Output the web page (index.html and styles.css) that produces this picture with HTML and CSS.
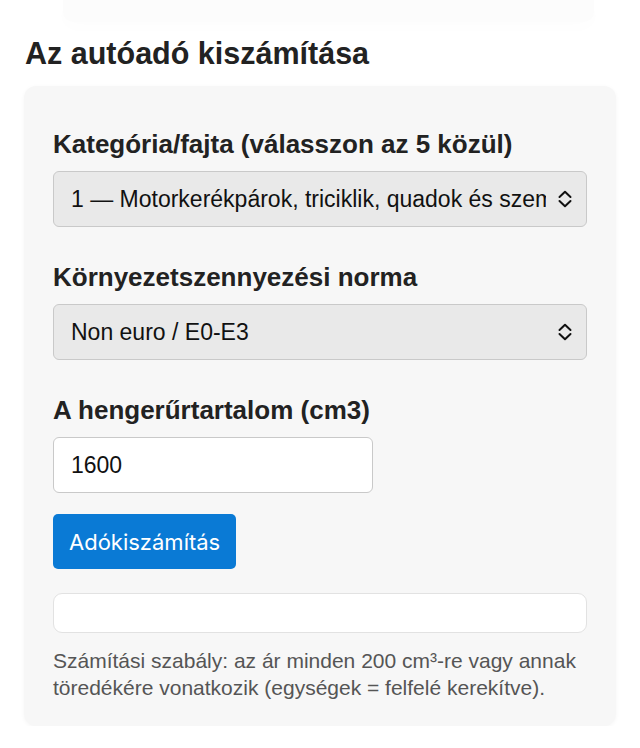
FILE: index.html
```html
<!DOCTYPE html>
<html lang="hu">
<head>
<meta charset="utf-8">
<title>Az autóadó kiszámítása</title>
<link rel="stylesheet" href="styles.css">
</head>
<body>
<div class="prev"></div>
<main class="page">
  <h1 class="title">Az autóadó kiszámítása</h1>
  <section class="card">
    <div class="field">
      <label class="label" for="cat">Kategória/fajta (válasszon az 5 közül)</label>
      <div class="select-wrap">
        <select id="cat" class="select">
          <option>1 — Motorkerékpárok, triciklik, quadok és személygépkocsik</option>
        </select>
        <svg class="chev" viewBox="0 0 16 20" width="16" height="20" aria-hidden="true"><path d="M2.5 8 L8 2.8 L13.5 8 M2.5 12 L8 17.2 L13.5 12" fill="none" stroke="#111" stroke-width="2" stroke-linecap="round" stroke-linejoin="round"/></svg>
      </div>
    </div>
    <div class="field field-next">
      <label class="label" for="norm">Környezetszennyezési norma</label>
      <div class="select-wrap">
        <select id="norm" class="select">
          <option>Non euro / E0-E3</option>
        </select>
        <svg class="chev" viewBox="0 0 16 20" width="16" height="20" aria-hidden="true"><path d="M2.5 8 L8 2.8 L13.5 8 M2.5 12 L8 17.2 L13.5 12" fill="none" stroke="#111" stroke-width="2" stroke-linecap="round" stroke-linejoin="round"/></svg>
      </div>
    </div>
    <div class="field field-next">
      <label class="label" for="cc">A hengerűrtartalom (cm3)</label>
      <input id="cc" class="input" type="text" value="1600">
    </div>
    <button class="btn" type="button">Adókiszámítás</button>
    <div class="output"></div>
    <p class="note">Számítási szabály: az ár minden 200 cm³-re vagy annak töredékére vonatkozik (egységek = felfelé kerekítve).</p>
  </section>
</main>
</body>
</html>
```
FILE: styles.css
```css
* { box-sizing: border-box; }
html, body { margin: 0; padding: 0; background: #ffffff; }
body {
  font-family: "Liberation Sans", Arial, sans-serif;
  color: #222222;
}
.prev {
  height: 22px;
  margin: 0 46px 0 63px;
  background: #fcfcfc;
  border-radius: 0 0 10px 10px;
  box-shadow: 0 6px 16px rgba(0, 0, 0, 0.012);
}
.page {
  padding: 0 24px;
}
.title {
  margin: 13px 0 15px 1px;
  font-size: 30.5px;
  line-height: 36px;
  font-weight: 700;
  color: #222222;
}
.card {
  background: #f7f7f7;
  border-radius: 12px;
  padding: 43px 29px 25px;
  box-shadow: 0 1px 4px rgba(0, 0, 0, 0.04);
}
.field-next { margin-top: 35px; }
.label {
  display: block;
  font-size: 26px;
  line-height: 30px;
  font-weight: 700;
  color: #222222;
  margin-bottom: 12px;
}
.select-wrap {
  position: relative;
}
.select {
  -webkit-appearance: none;
  appearance: none;
  display: block;
  width: 100%;
  height: 56px;
  padding: 0 40px 0 17px;
  background: #e9e9e9;
  border: 1px solid #c9c9c9;
  border-radius: 6px;
  font-family: "Liberation Sans", Arial, sans-serif;
  font-size: 23px;
  color: #111111;
}
.chev {
  position: absolute;
  right: 14px;
  top: 18px;
  pointer-events: none;
}
.input {
  display: block;
  width: 320px;
  height: 56px;
  margin-top: 1px;
  padding: 0 17px;
  background: #ffffff;
  border: 1px solid #c9c9c9;
  border-radius: 6px;
  font-family: "Liberation Sans", Arial, sans-serif;
  font-size: 23px;
  color: #111111;
}
.btn {
  display: block;
  margin-top: 21px;
  height: 55px;
  padding: 0 16px;
  background: #0a7ad5;
  border: none;
  border-radius: 5px;
  color: #ffffff;
  font-family: Inter, "Liberation Sans", sans-serif;
  font-size: 22px;
}
.output {
  margin-top: 24px;
  height: 40px;
  background: #ffffff;
  border: 1px solid #e2e2e2;
  border-radius: 9px;
}
.note {
  margin: 14px 0 0;
  font-size: 21px;
  line-height: 27px;
  color: #555555;
}
```
